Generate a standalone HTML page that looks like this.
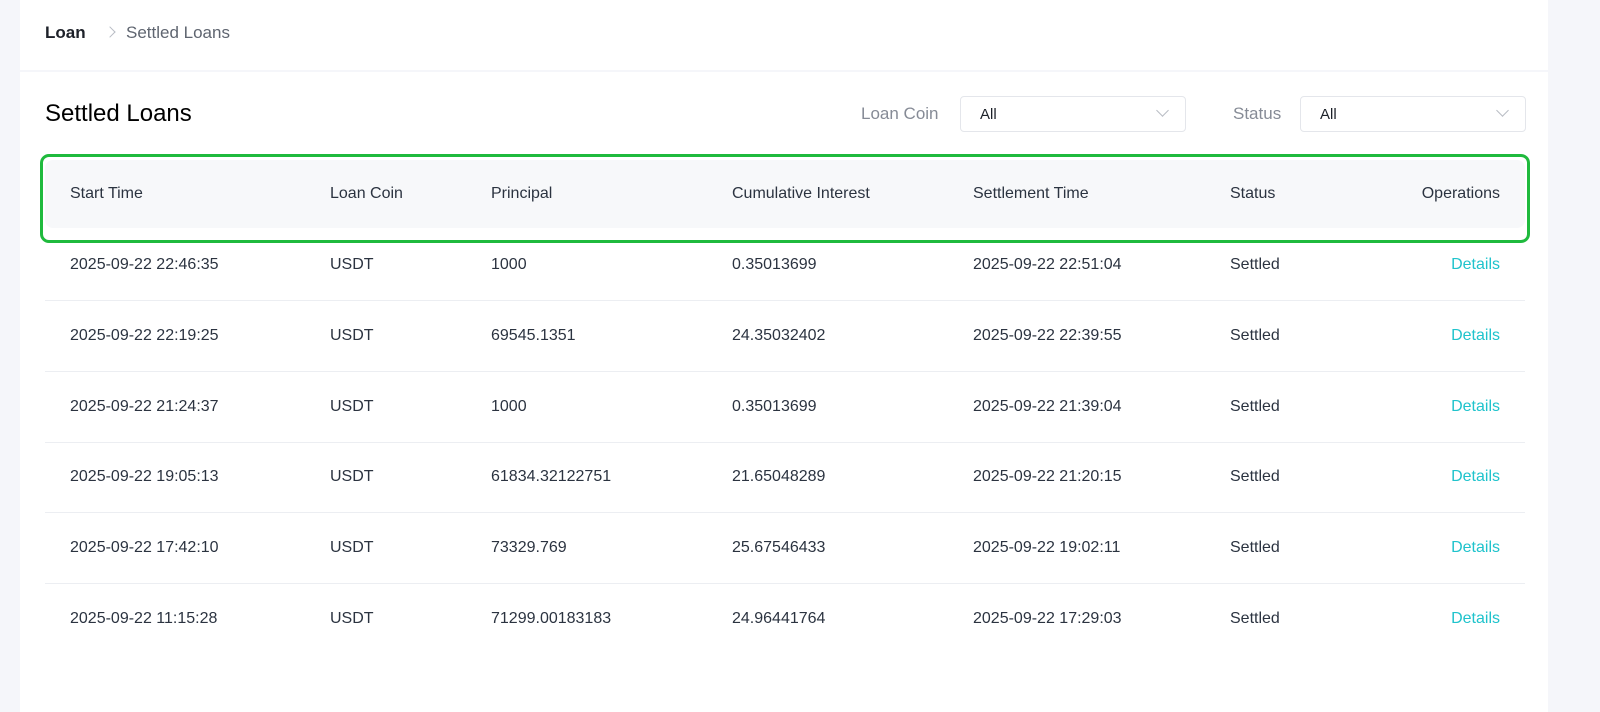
<!DOCTYPE html>
<html><head><style>
body{margin:0;width:1600px;height:705px;background:#f5f6fa;font-family:"Liberation Sans",sans-serif;position:relative;overflow:hidden}
.a{position:absolute}
.card{background:#fff;left:20px;width:1528px}
.t{font-size:16px;color:#2b3340;white-space:nowrap}
.row{position:absolute;left:45px;width:1480px;height:71px;border-bottom:1px solid #eceef2}
.row span{position:absolute;top:0;line-height:71px;font-size:16px;color:#2b3340}
.d{right:25px;color:#1fc3cc!important}
.sel{background:#fff;border:1px solid #e4e6eb;border-radius:4px;height:34px}
.sel span{position:absolute;left:19px;top:9px;font-size:15px;color:#1d2129}
.chev{position:absolute;right:18px;top:9px;width:8px;height:8px;border-right:1px solid #b8bcc4;border-bottom:1px solid #b8bcc4;transform:rotate(45deg)}
</style></head><body>
<div class="a card" style="top:0;height:70px"></div>
<div class="a t" style="left:45px;top:23px;font-weight:bold;font-size:17px;color:#1d2129">Loan</div>
<div class="a" style="left:106px;top:28px;width:7px;height:7px;border-right:1px solid #b8bcc4;border-top:1px solid #b8bcc4;transform:rotate(45deg)"></div>
<div class="a t" style="left:126px;top:23px;font-size:17px;color:#5f6570">Settled Loans</div>
<div class="a card" style="top:72px;height:640px"></div>
<div class="a" style="left:45px;top:100px;font-size:24px;color:#000">Settled Loans</div>
<div class="a t" style="left:861px;top:104px;font-size:17px;color:#868b96">Loan Coin</div>
<div class="a sel" style="left:960px;top:96px;width:224px"><span>All</span><div class="chev"></div></div>
<div class="a t" style="left:1233px;top:104px;font-size:17px;color:#868b96">Status</div>
<div class="a sel" style="left:1300px;top:96px;width:224px"><span>All</span><div class="chev"></div></div>
<div class="a" style="left:45px;top:160px;width:1480px;height:68px;background:#f7f8fa;border-radius:8px"></div>
<div class="a" style="left:40px;top:154px;width:1484px;height:83px;border:3px solid #1fba3d;border-radius:9px"></div>
<div class="row" style="top:160px;height:68px;border:none">
<span style="left:25px;line-height:68px">Start Time</span><span style="left:285px;line-height:68px">Loan Coin</span><span style="left:446px;line-height:68px">Principal</span><span style="left:687px;line-height:68px">Cumulative Interest</span><span style="left:928px;line-height:68px">Settlement Time</span><span style="left:1185px;line-height:68px">Status</span><span style="right:25px;line-height:68px">Operations</span></div>
<div class="row" style="top:229px"><span style="left:25px">2025-09-22 22:46:35</span><span style="left:285px">USDT</span><span style="left:446px">1000</span><span style="left:687px">0.35013699</span><span style="left:928px">2025-09-22 22:51:04</span><span style="left:1185px">Settled</span><span class="d">Details</span></div>
<div class="row" style="top:300px"><span style="left:25px">2025-09-22 22:19:25</span><span style="left:285px">USDT</span><span style="left:446px">69545.1351</span><span style="left:687px">24.35032402</span><span style="left:928px">2025-09-22 22:39:55</span><span style="left:1185px">Settled</span><span class="d">Details</span></div>
<div class="row" style="top:371px"><span style="left:25px">2025-09-22 21:24:37</span><span style="left:285px">USDT</span><span style="left:446px">1000</span><span style="left:687px">0.35013699</span><span style="left:928px">2025-09-22 21:39:04</span><span style="left:1185px">Settled</span><span class="d">Details</span></div>
<div class="row" style="top:441px"><span style="left:25px">2025-09-22 19:05:13</span><span style="left:285px">USDT</span><span style="left:446px">61834.32122751</span><span style="left:687px">21.65048289</span><span style="left:928px">2025-09-22 21:20:15</span><span style="left:1185px">Settled</span><span class="d">Details</span></div>
<div class="row" style="top:512px"><span style="left:25px">2025-09-22 17:42:10</span><span style="left:285px">USDT</span><span style="left:446px">73329.769</span><span style="left:687px">25.67546433</span><span style="left:928px">2025-09-22 19:02:11</span><span style="left:1185px">Settled</span><span class="d">Details</span></div>
<div class="row" style="top:583px;border:none"><span style="left:25px">2025-09-22 11:15:28</span><span style="left:285px">USDT</span><span style="left:446px">71299.00183183</span><span style="left:687px">24.96441764</span><span style="left:928px">2025-09-22 17:29:03</span><span style="left:1185px">Settled</span><span class="d">Details</span></div>
</body></html>
